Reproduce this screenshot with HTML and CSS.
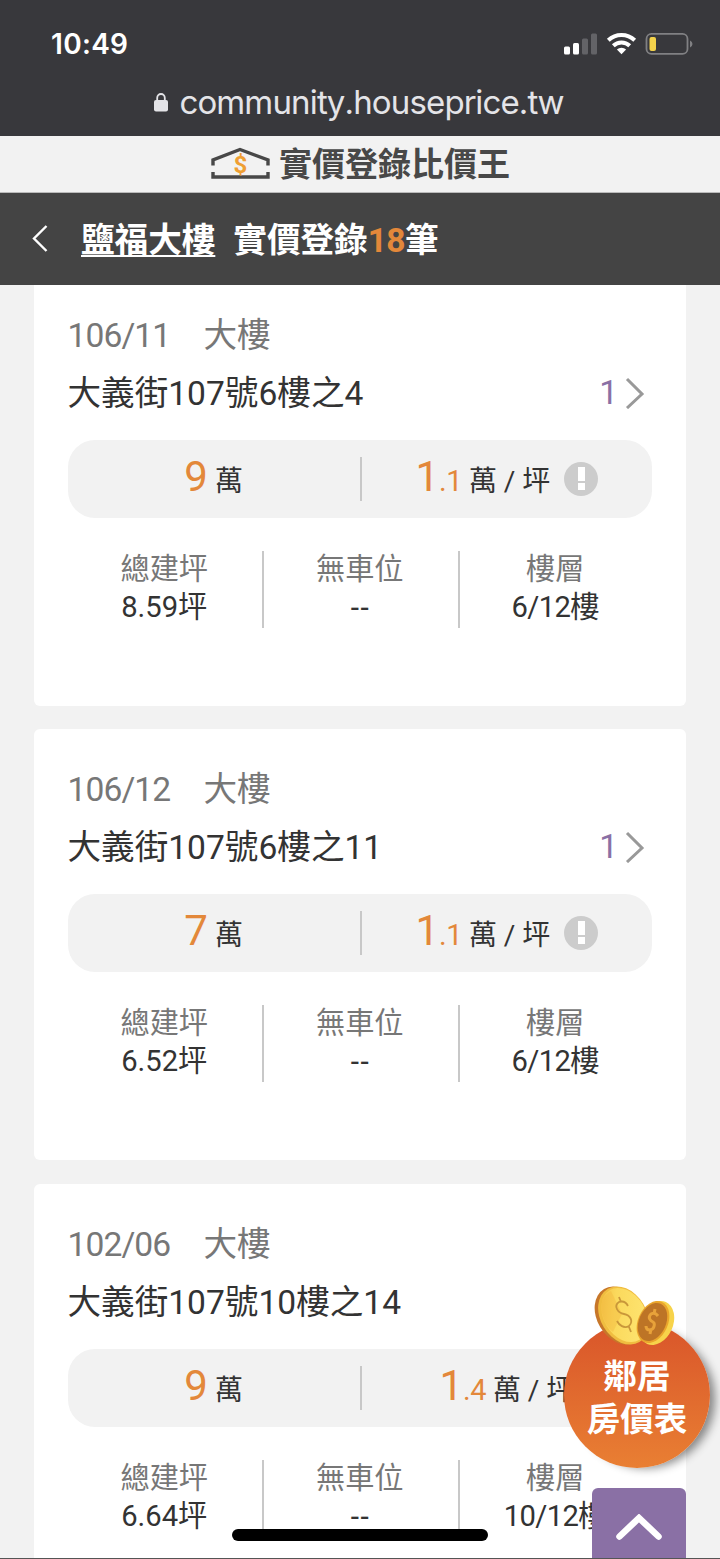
FILE: index.html
```html
<!DOCTYPE html>
<html lang="zh-Hant">
<head>
    <meta charset="UTF-8">
    <meta name="viewport" content="width=device-width, initial-scale=1.0">
    <title>鹽福大樓 實價登錄</title>
    <link rel="stylesheet" href="styles.css">
</head>
<body>
    <div class="browser">
        <div class="status">
            <span class="time">10:49</span>
            <svg class="status-icons" width="130" height="24" viewBox="0 0 130 24">
                <rect x="1" y="14.500" width="6" height="8" rx="1.500" fill="#fff"/>
                <rect x="10" y="11" width="6" height="11.500" rx="1.500" fill="#fff"/>
                <rect x="19" y="6.500" width="6" height="16" rx="1.500" fill="#636367"/>
                <rect x="28" y="1.500" width="6" height="21" rx="1.500" fill="#636367"/>
                <g fill="none" stroke="#fff" stroke-width="4">
                    <path d="M45.300 8.300a19 19 0 0 1 26.400 0"/>
                    <path d="M50.300 13.700a11.900 11.900 0 0 1 16.400 0"/>
                </g>
                <path d="M58.500 22.300l-4.600-4.700a6.800 6.800 0 0 1 9.200 0z" fill="#fff"/>
                <rect x="83.500" y="1.900" width="41" height="20" rx="5" fill="none" stroke="#808083" stroke-width="1.800"/>
                <rect x="86.500" y="5" width="6.500" height="14" rx="2" fill="#f3d24b"/>
                <path d="M127 8.500q2.500 1.200 2.500 3.500t-2.500 3.500z" fill="#808083"/>
            </svg>
        </div>
        <div class="address-bar">
            <svg width="16" height="19" viewBox="0 0 16 19">
                <path d="M4.200 8V5a3.800 4 0 0 1 7.600 0V8" fill="none" stroke="#e4e4e8" stroke-width="1.800"/>
                <rect x="1" y="7" width="14" height="11.500" rx="2" fill="#e4e4e8"/>
            </svg>
            <span>community.houseprice.tw</span>
        </div>
    </div>

    <div class="logo-bar">
        <svg width="60" height="36" viewBox="0 0 60 36">
            <path d="M3 19.500v-5.500L30 3.500l28 10.500v5.500M3 26v5h55V26" fill="none" stroke="#484848" stroke-width="3.400"/>
            <text class="dollar" x="30.500" y="26.500" text-anchor="middle">$</text>
        </svg>
        <span>實價登錄比價王</span>
    </div>

    <div class="title-bar">
        <svg width="18" height="28" viewBox="0 0 18 28">
            <path d="M15.500 1L3 13.500L15.500 26" fill="none" stroke="#fff" stroke-width="2.400"/>
        </svg>
        <h1><a>鹽福大樓</a>實價登錄<em>18</em>筆</h1>
    </div>

    <div class="list">
        <div class="card">
            <p class="date"><span>106/11</span>大樓</p>
            <div class="address">
                <h2>大義街107號6樓之4</h2>
                <span class="count">1</span>
                <svg width="20" height="32" viewBox="0 0 20 32"><path d="M2 2L17 17L2 31" fill="none" stroke="#999" stroke-width="3"/></svg>
            </div>
            <div class="price">
                <div><b>9</b> 萬</div>
                <div><b>1<small>.1</small></b> 萬 / 坪<i class="info"></i></div>
            </div>
            <div class="stats">
                <dl><dt>總建坪</dt><dd>8.59坪</dd></dl>
                <dl><dt>無車位</dt><dd class="none">--</dd></dl>
                <dl><dt>樓層</dt><dd class="floor">6/12樓</dd></dl>
            </div>
        </div>

        <div class="card">
            <p class="date"><span>106/12</span>大樓</p>
            <div class="address">
                <h2>大義街107號6樓之11</h2>
                <span class="count">1</span>
                <svg width="20" height="32" viewBox="0 0 20 32"><path d="M2 2L17 17L2 31" fill="none" stroke="#999" stroke-width="3"/></svg>
            </div>
            <div class="price">
                <div><b>7</b> 萬</div>
                <div><b>1<small>.1</small></b> 萬 / 坪<i class="info"></i></div>
            </div>
            <div class="stats">
                <dl><dt>總建坪</dt><dd>6.52坪</dd></dl>
                <dl><dt>無車位</dt><dd class="none">--</dd></dl>
                <dl><dt>樓層</dt><dd class="floor">6/12樓</dd></dl>
            </div>
        </div>

        <div class="card">
            <p class="date"><span>102/06</span>大樓</p>
            <div class="address">
                <h2>大義街107號10樓之14</h2>
            </div>
            <div class="price">
                <div><b>9</b> 萬</div>
                <div><b>1<small>.4</small></b> 萬 / 坪</div>
            </div>
            <div class="stats">
                <dl><dt>總建坪</dt><dd>6.64坪</dd></dl>
                <dl><dt>無車位</dt><dd class="none">--</dd></dl>
                <dl><dt>樓層</dt><dd class="floor">10/12樓</dd></dl>
            </div>
        </div>
    </div>

    <!-- Floating buttons -->
    <div class="neighbor">
        <svg class="coins" width="82" height="64" viewBox="0 0 82 64">
            <defs>
                <linearGradient id="gold" x1="0" y1="0" x2="1" y2="1">
                    <stop offset="0" stop-color="#f0b63a"/>
                    <stop offset=".35" stop-color="#fbd95c"/>
                    <stop offset="1" stop-color="#ffe878"/>
                </linearGradient>
            </defs>
            <ellipse cx="26" cy="31.500" rx="23" ry="31" transform="rotate(-31 26 31.500)" fill="#c7772a"/>
            <ellipse cx="29.500" cy="31.500" rx="23" ry="31" transform="rotate(-31 29.500 31.500)" fill="#f0bd40"/>
            <ellipse cx="30.500" cy="31" rx="21" ry="29" transform="rotate(-31 30.500 31)" fill="url(#gold)"/>
            <path d="M8 29Q5 13 17 7L28 30L19 48Q11 42 8 29z" fill="#f2b63e" opacity=".4"/>
            <path d="M34 22q-3-6-9-4c-6 4-1 11 5 12s10 7 5 12c-5 3-10-1-12-5M25 13l2 5M35 43l2 5" fill="none" stroke="#c9973a" stroke-width="1.800"/>
            <ellipse cx="62.500" cy="39" rx="16.500" ry="23" transform="rotate(24 62.500 39)" fill="#f7d34a"/>
            <ellipse cx="59" cy="38" rx="15" ry="22" transform="rotate(24 59 38)" fill="#eaa52c"/>
            <ellipse cx="58.500" cy="38" rx="13.500" ry="20" transform="rotate(24 58.500 38)" fill="#bd7426"/>
            <path d="M64 32q-3-4-7-2c-4 4 0 7 2 8s2 7-3 8q-4 0-4-4M61 25l-1 5M57 45l-1 5" fill="none" stroke="#e8a23a" stroke-width="3"/>
        </svg>
        <span>鄰居<br>房價表</span>
    </div>
    <div class="to-top">
        <svg width="50" height="28" viewBox="0 0 50 28"><path d="M5.500 22.500L25 4L44.500 22.500" fill="none" stroke="#fff" stroke-width="6.500" stroke-linecap="round"/></svg>
    </div>
    <div class="home-indicator"></div>
</body>
</html>
```
FILE: styles.css
```css
* {
    box-sizing: border-box;
    margin: 0;
    padding: 0;
}

body {
    position: relative;
    height: 1559px;
    overflow: hidden;
    background: #f2f2f2;
    border-bottom: 1px solid #555;
    color: #333;
    font-family: Roboto, "Noto Sans CJK TC", sans-serif;
    font-kerning: none;
}

svg {
    display: block;
    flex: none;
}

/* Browser chrome */
.browser {
    height: 136px;
    background: #38383c;
    color: #e4e4e8;
    font-family: Inter, sans-serif;
}

.status {
    display: flex;
    justify-content: space-between;
    align-items: center;
    height: 68px;
    padding: 20px 27px 0 51px;
}

.time {
    color: #fff;
    font-size: 28px;
    font-weight: 600;
    letter-spacing: 0.3px;
}

.address-bar {
    display: flex;
    justify-content: center;
    align-items: center;
    gap: 10px;
    height: 68px;
    padding-right: 3px;
    font-size: 33px;
    letter-spacing: -0.85px;
}

.logo-bar {
    display: flex;
    justify-content: center;
    align-items: center;
    gap: 9px;
    height: 57px;
    border-bottom: 1px solid #bbb;
    color: #484848;
    font-size: 33px;
    font-weight: bold;
    line-height: 56px;
}

.logo-bar span {
    padding-top: 2px;
}

.dollar {
    fill: #ef9f33;
    font: bold 24px Roboto, sans-serif;
}

.title-bar {
    display: flex;
    align-items: center;
    gap: 32px;
    height: 92px;
    padding-left: 31px;
    background: #444;
    color: #fff;
}

.title-bar h1 {
    padding-top: 3px;
    font-size: 33.600px;
    line-height: 48px;
}

.title-bar a {
    margin-right: 18px;
    text-decoration: underline;
    text-decoration-thickness: 2px;
    text-underline-offset: 3px;
    text-decoration-skip-ink: none;
}

.title-bar em {
    color: #e3883a;
    font-style: normal;
    letter-spacing: -0.6px;
}

/* Deal cards, the first one is scrolled under the title bar */
.list {
    display: flex;
    flex-direction: column;
    gap: 23.500px;
    height: 1273px;
    margin: 0 34px;
    overflow: hidden;
}

.card {
    flex: none;
    height: 431px;
    padding: 36px 34px 0 33.500px;
    background: #fff;
    border-radius: 6px;
}

.card:first-child {
    height: 420.500px;
    padding-top: 26px;
    border-radius: 0 0 6px 6px;
}

.date {
    display: flex;
    gap: 34px;
    height: 50px;
    color: #777;
    font-size: 33.600px;
    line-height: 50px;
}

.date span {
    width: 102px;
    letter-spacing: -0.9px;
}

.address {
    display: flex;
    align-items: center;
    height: 64px;
    padding-right: 7px;
}

.address h2 {
    flex: 1;
    padding-bottom: 5px;
    font-size: 33.600px;
    font-weight: normal;
}

.count {
    margin-right: 7px;
    padding-bottom: 2px;
    color: #8a70a5;
    font-size: 33.600px;
}

.price {
    display: flex;
    align-items: center;
    height: 78px;
    margin-top: 15px;
    background: #f2f2f2;
    border-radius: 27px;
    font-size: 28px;
}

.price div {
    display: flex;
    flex: 1;
    justify-content: center;
    align-items: baseline;
    height: 44px;
    padding: 0 1px;
    line-height: 40px;
    white-space: pre;
}

.price div + div {
    padding: 0;
    border-left: 2px solid #c8c8c8;
}

.price b {
    color: #e3883a;
    font-size: 42px;
    font-weight: normal;
}

.price small {
    font-size: 29px;
    letter-spacing: -0.5px;
}

.info {
    display: flex;
    flex-direction: column;
    align-items: center;
    align-self: center;
    gap: 2px;
    width: 34px;
    height: 34px;
    margin-left: 14px;
    padding-top: 5px;
    background: #ccc;
    border-radius: 50%;
}

.info::before,
.info::after {
    content: "";
    width: 7px;
    height: 14px;
    background: #fff;
}

.info::after {
    height: 7px;
}

.stats {
    display: flex;
    margin: 33px -1px 0 1px;
    font-size: 29.200px;
    line-height: 38px;
    text-align: center;
}

.stats dl {
    flex: 1;
    height: 77px;
    padding-right: 2px;
}

.stats dl + dl {
    border-left: 2px solid #c8c8c8;
}

.stats dt,
.stats dd {
    margin-top: -1px;
    margin-bottom: 1px;
}

.stats dt {
    color: #777;
}

.stats .none {
    font-family: "Liberation Sans", sans-serif;
}

.stats .floor {
    letter-spacing: -0.6px;
}

/* Floating buttons */
.neighbor {
    position: absolute;
    top: 1322px;
    left: 564px;
    width: 146px;
    height: 146px;
    padding-top: 33px;
    background: linear-gradient(#d9552a, #e97f33);
    border-radius: 50%;
    box-shadow: 9px 4px 10px -4px rgba(0, 0, 0, 0.45);
    color: #fff;
    font-size: 33.500px;
    font-weight: bold;
    line-height: 43px;
    text-align: center;
}

.coins {
    position: absolute;
    top: -38px;
    left: 30px;
}

.to-top {
    position: absolute;
    right: 34px;
    bottom: 0;
    display: flex;
    justify-content: center;
    width: 94px;
    height: 70px;
    padding-top: 26px;
    background: #8a70a5;
    border-radius: 6px 6px 0 0;
}

.home-indicator {
    position: absolute;
    left: 232px;
    bottom: 17px;
    width: 256px;
    height: 12px;
    background: #000;
    border-radius: 6px;
}
```
